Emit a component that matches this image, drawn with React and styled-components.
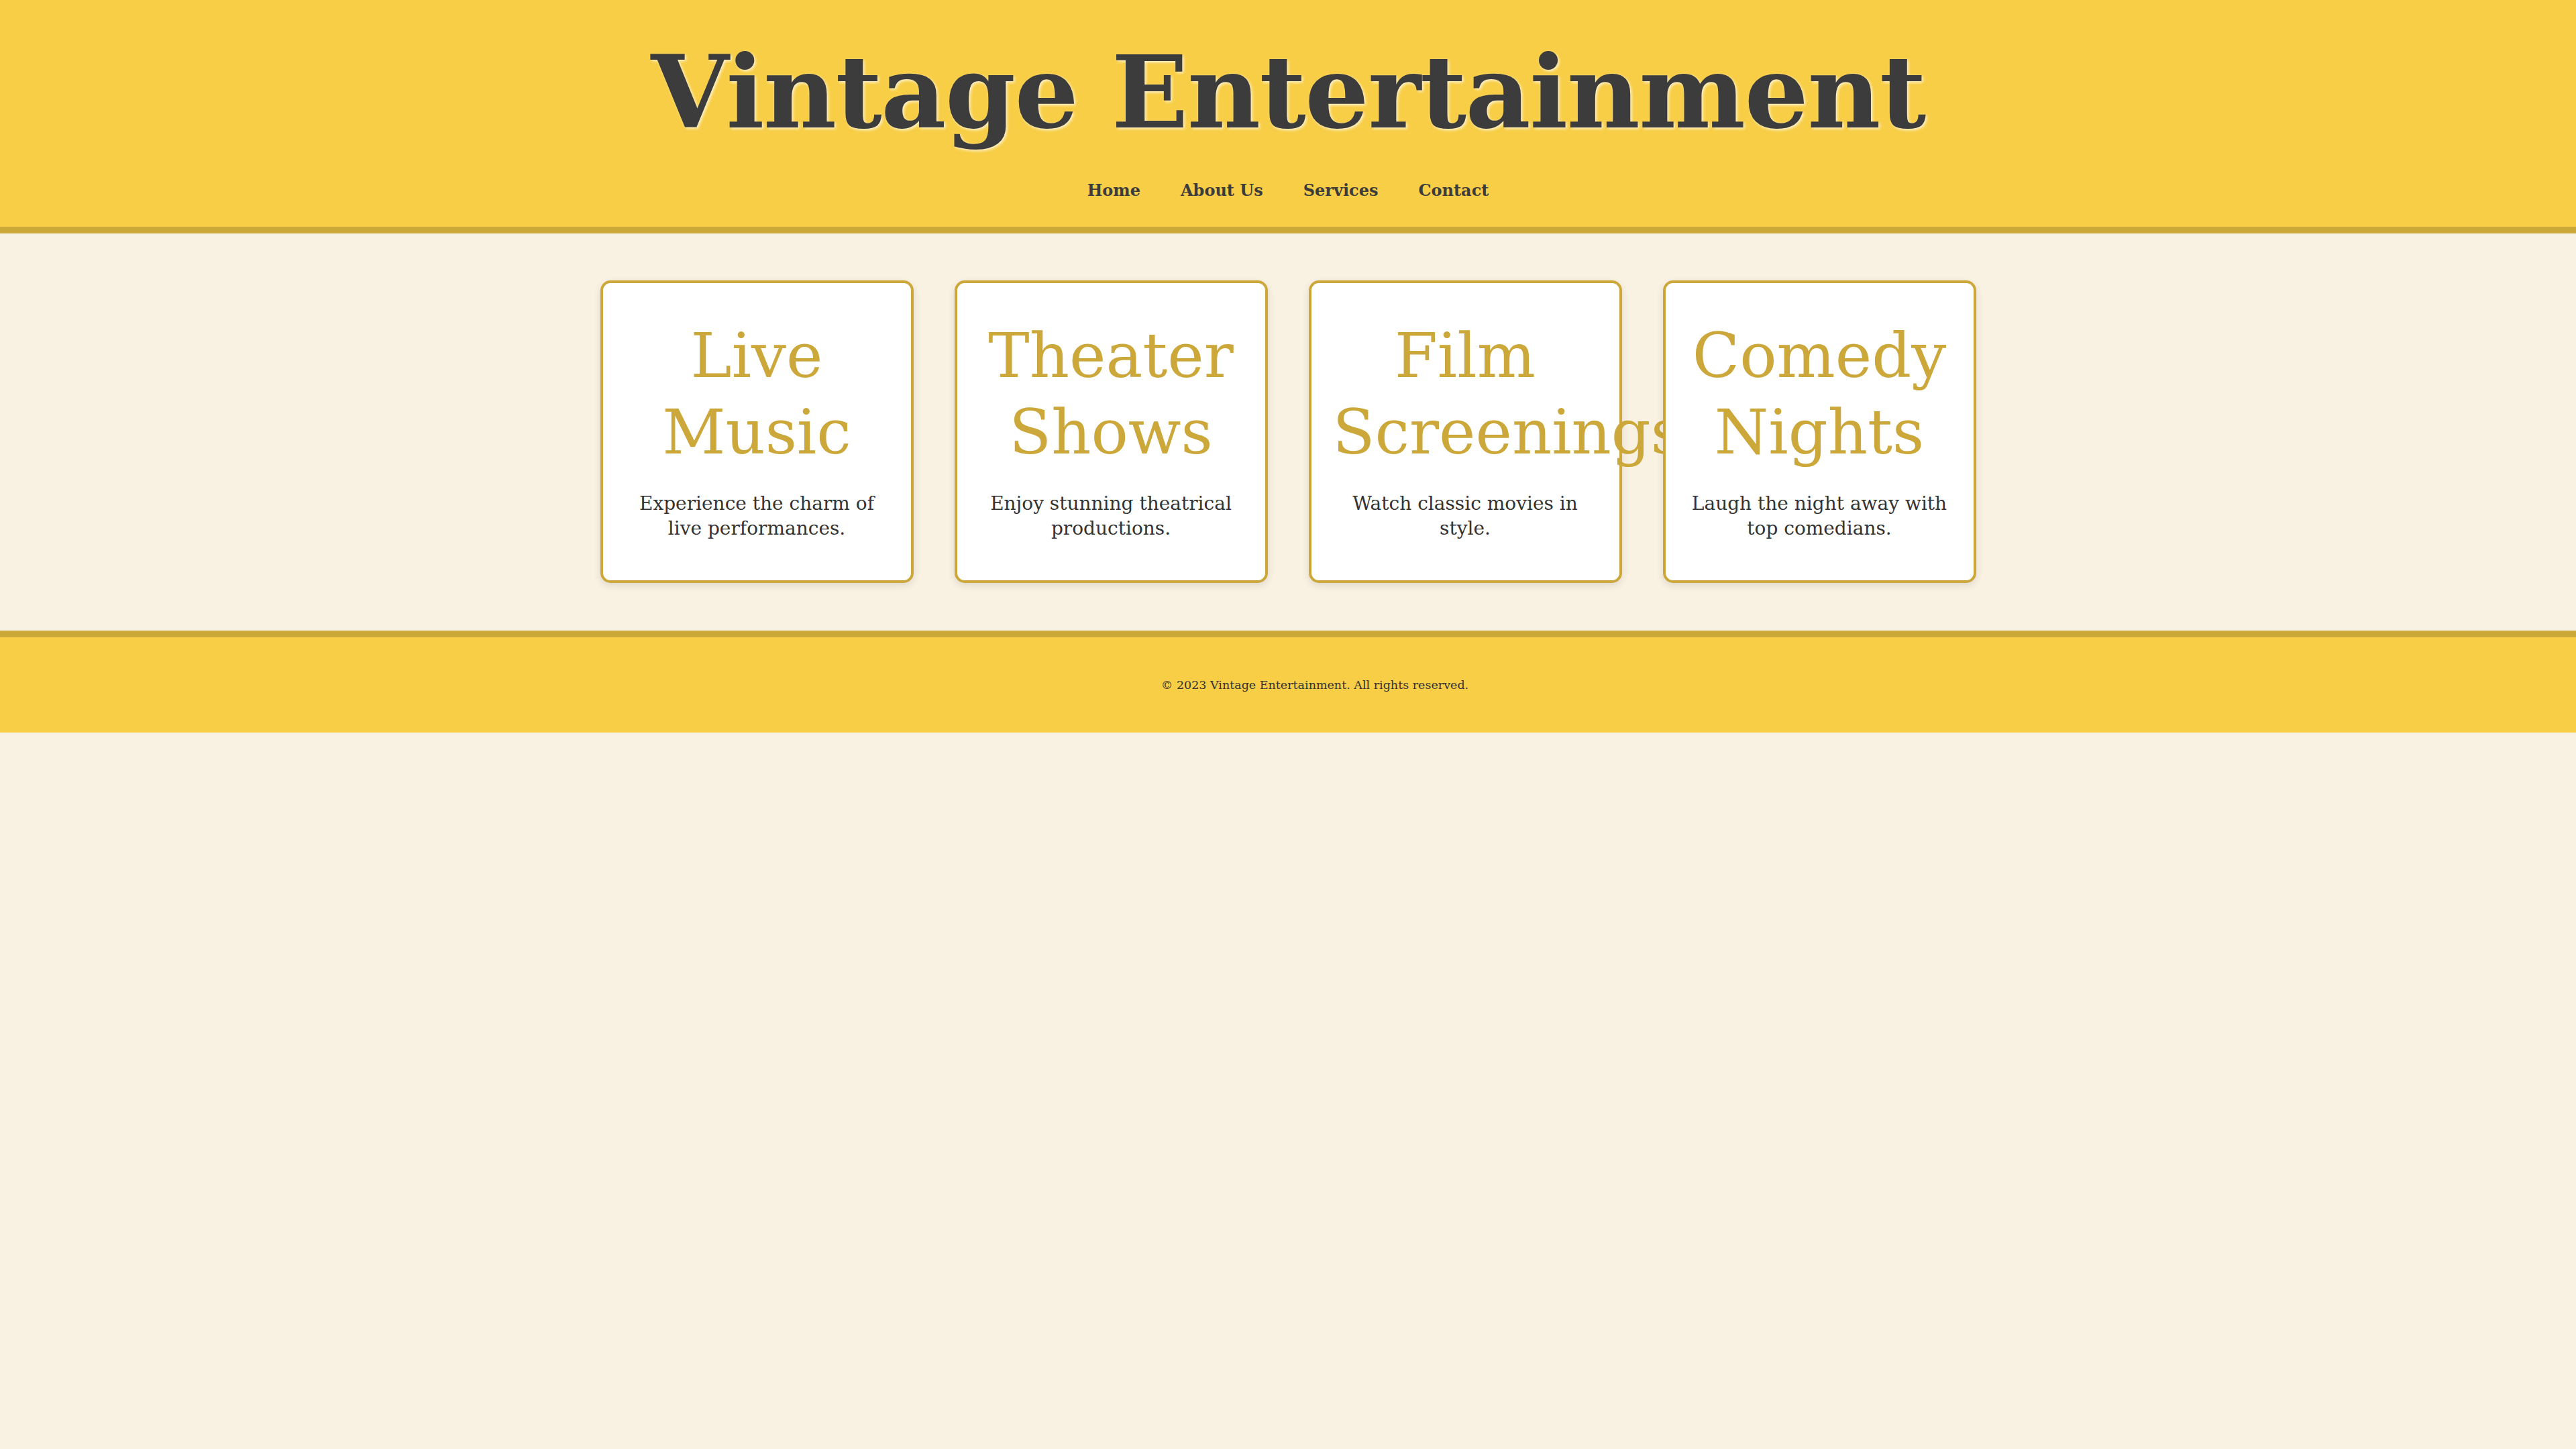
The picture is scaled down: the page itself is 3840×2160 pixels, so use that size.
import React from "react";
import styled, { createGlobalStyle } from "styled-components";

const Global = createGlobalStyle`
  html, body {
    margin: 0;
    padding: 0;
    background: #f9f2e3;
    font-family: "DejaVu Serif", "Liberation Serif", serif;
    color: #3c3c3c;
  }
  * { box-sizing: border-box; }
`;

const Header = styled.header`
  background: #f8ce46;
  border-bottom: 10px solid #cca73a;
  padding: 46px 0 39px;
  display: flex;
  flex-direction: column;
  align-items: center;
`;

const Title = styled.h1`
  margin: 0;
  font-size: 150px;
  line-height: 182px;
  font-weight: 700;
  letter-spacing: -1.5px;
  color: #3c3c3c;
  text-shadow: 2px 2px 4px rgba(255, 255, 255, 0.75);
  white-space: nowrap;
`;

const Nav = styled.nav`
  margin-top: 41px;
  display: flex;
  gap: 60px;
`;

const NavLink = styled.a`
  font-size: 24px;
  line-height: 30px;
  font-weight: 700;
  color: #3c3c3c;
  text-decoration: none;
`;

const Main = styled.main`
  padding: 70px 0 71px;
  display: flex;
  justify-content: center;
  gap: 61px;
`;

const Card = styled.section`
  width: 467px;
  background: #ffffff;
  border: 4px solid #cca73a;
  border-radius: 15px;
  box-shadow: 0 4px 12px rgba(0, 0, 0, 0.1);
  padding: 32px 32px;
  text-align: center;
`;

const CardTitle = styled.h2`
  margin: 20px 0 0;
  font-size: 92px;
  line-height: 114px;
  font-weight: 400;
  color: #cca73a;
`;

const CardText = styled.p`
  margin: 30px 0 27px;
  font-size: 28px;
  line-height: 37px;
  color: #333333;
`;

const Footer = styled.footer`
  background: #f8ce46;
  border-top: 10px solid #cca73a;
  padding: 60px 0 60px 80px;
  text-align: center;
`;

const FooterText = styled.p`
  margin: 0;
  font-size: 17.5px;
  line-height: 22px;
  color: #333333;
`;

const services = [
  { title: "Live Music", text: "Experience the charm of live performances." },
  { title: "Theater Shows", text: "Enjoy stunning theatrical productions." },
  { title: "Film Screenings", text: "Watch classic movies in style." },
  { title: "Comedy Nights", text: "Laugh the night away with top comedians." },
];

export default function App() {
  return (
    <>
      <Global />
      <Header>
        <Title>Vintage Entertainment</Title>
        <Nav>
          <NavLink href="#">Home</NavLink>
          <NavLink href="#">About Us</NavLink>
          <NavLink href="#">Services</NavLink>
          <NavLink href="#">Contact</NavLink>
        </Nav>
      </Header>
      <Main>
        {services.map((s) => (
          <Card key={s.title}>
            <CardTitle>{s.title}</CardTitle>
            <CardText>{s.text}</CardText>
          </Card>
        ))}
      </Main>
      <Footer>
        <FooterText>© 2023 Vintage Entertainment. All rights reserved.</FooterText>
      </Footer>
    </>
  );
}
